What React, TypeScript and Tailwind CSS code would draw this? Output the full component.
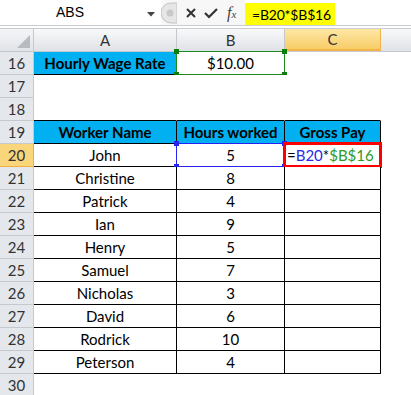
import React from 'react';

type Row = { n: number; a?: string; b?: string; kind: 'rate' | 'blank' | 'head' | 'data' | 'edge' | 'after' };

const rows: Row[] = [
  { n: 16, a: 'Hourly Wage Rate', b: '$10.00', kind: 'rate' },
  { n: 17, kind: 'blank' },
  { n: 18, kind: 'edge' },
  { n: 19, a: 'Worker Name', b: 'Hours worked', kind: 'head' },
  { n: 20, a: 'John', b: '5', kind: 'data' },
  { n: 21, a: 'Christine', b: '8', kind: 'data' },
  { n: 22, a: 'Patrick', b: '4', kind: 'data' },
  { n: 23, a: 'Ian', b: '9', kind: 'data' },
  { n: 24, a: 'Henry', b: '5', kind: 'data' },
  { n: 25, a: 'Samuel', b: '7', kind: 'data' },
  { n: 26, a: 'Nicholas', b: '3', kind: 'data' },
  { n: 27, a: 'David', b: '6', kind: 'data' },
  { n: 28, a: 'Rodrick', b: '10', kind: 'data' },
  { n: 29, a: 'Peterson', b: '4', kind: 'data' },
  { n: 30, kind: 'after' },
];

const font = { fontFamily: 'Lato, "Open Sans", sans-serif' };

function Handle({ color, pos }: { color: string; pos: string }) {
  return <span className={`absolute w-[5px] h-[5px] ${color} ${pos}`} />;
}

function FormulaBar() {
  return (
    <div className="h-[26px] flex border-b border-[#c9cdd2] bg-white" style={font}>
      <div className="w-[161px] flex items-center relative">
        <span className="w-[140px] text-center text-black" style={{ fontFamily: '"Liberation Sans", sans-serif', fontSize: 14 }}>ABS</span>
        <svg className="absolute left-[147px] top-[12px]" width="8" height="5" viewBox="0 0 8 5">
          <path d="M0 0 H8 L4 4.5 Z" fill="#444" />
        </svg>
      </div>
      <div className="w-[84px] flex items-center bg-[#f7f7f7]">
        <svg width="16" height="24" viewBox="0 0 16 24" className="shrink-0">
          <path d="M16 2 H10 A10 10 0 0 0 10 22 H16 Z" fill="#e6e6e6" stroke="#c2c2c2" />
          <circle cx="9" cy="12" r="3.5" fill="#c8c8c8" />
        </svg>
        <svg width="12" height="12" viewBox="0 0 12 12" className="ml-[8px]">
          <path d="M2 2 L10 10 M10 2 L2 10" stroke="#333" strokeWidth="2" />
        </svg>
        <svg width="14" height="12" viewBox="0 0 14 12" className="ml-[7px]">
          <path d="M1 6 L5 10 L13 2" stroke="#333" strokeWidth="2.2" fill="none" />
        </svg>
        <span className="ml-[9px] text-[#444] italic" style={{ fontFamily: '"Liberation Serif", serif', fontSize: 16 }}>
          f<span className="text-[11px]">x</span>
        </span>
      </div>
      <div className="flex-1 pt-[3px]">
        <div className="w-[90px] h-[22px] bg-[#ffff00] flex items-center pl-[7px] text-[14px] tracking-[-0.2px] text-black">=B20*$B$16</div>
      </div>
    </div>
  );
}

function ColHeader() {
  const base = 'h-full flex items-center justify-center border-r border-[#c5c9cf] bg-gradient-to-b from-[#f8f9fa] to-[#dfe2e7] text-[#333] text-[15px]';
  return (
    <div className="h-[23px] flex border-b border-[#c5c9cf]" style={font}>
      <div className="w-[34px] h-full relative border-r border-[#c5c9cf] bg-gradient-to-b from-[#f4f5f7] to-[#e1e4e8]">
        <svg className="absolute right-[3px] bottom-[3px]" width="13" height="13" viewBox="0 0 13 13">
          <path d="M13 0 V13 H0 Z" fill="#b7bbc1" />
        </svg>
      </div>
      <div className={`w-[143px] ${base}`}>A</div>
      <div className={`w-[108px] ${base}`}>B</div>
      <div className="w-[96px] h-full flex items-center justify-center border-r border-b-2 border-[#f2b34a] bg-gradient-to-b from-[#fde7a4] to-[#f8cd67] text-[#333] text-[15px]">C</div>
      <div className="flex-1 h-full bg-gradient-to-b from-[#f8f9fa] to-[#dfe2e7]" />
    </div>
  );
}

function SheetRow({ r }: { r: Row }) {
  const boxed = r.kind === 'head' || r.kind === 'data';
  const cell = 'h-full flex items-center justify-center text-[15px] text-black border-r border-b relative';
  const line = boxed ? 'border-black' : r.kind === 'edge' ? 'border-r-transparent border-b-black' : 'border-transparent';
  const fill = r.kind === 'head' ? 'bg-[#00b0f0] font-bold' : 'bg-white';
  const selRow = r.n === 20;
  return (
    <div className="h-[23px] flex" style={font}>
      <div
        className={`w-[34px] shrink-0 h-full flex items-center justify-center text-[15px] border-r border-b ${
          selRow ? 'bg-[#f9d67c] border-[#f0b040] text-[#333]' : 'bg-[#e4e7eb] border-[#c5c9cf] text-[#333]'
        }`}
      >
        {r.n}
      </div>
      {r.kind === 'rate' ? (
        <>
          <div className={`w-[143px] ${cell} bg-[#00b0f0] font-bold border-r-transparent border-b-black`}>{r.a}</div>
          <div className={`w-[108px] ${cell} border-transparent`}>
            {r.b}
            <span className="absolute -left-[1px] -top-[1px] right-[-1px] bottom-[-1px] border border-[#1e8a1e]" />
            <Handle color="bg-[#0b7d0b]" pos="-left-[3px] -top-[3px]" />
            <Handle color="bg-[#0b7d0b]" pos="-right-[3px] -top-[3px]" />
            <Handle color="bg-[#0b7d0b]" pos="-left-[3px] -bottom-[3px]" />
            <Handle color="bg-[#0b7d0b]" pos="-right-[3px] -bottom-[3px]" />
          </div>
          <div className={`w-[96px] ${cell} border-transparent`} />
        </>
      ) : (
        <>
          <div className={`w-[143px] ${cell} ${line} ${fill}`}>{r.a}</div>
          <div className={`w-[108px] ${cell} ${line} ${fill}`}>
            {r.b}
            {selRow && (
              <>
                <span className="absolute -left-[1px] -top-[1px] right-[0px] bottom-[-1px] border border-[#2424f0]" />
                <Handle color="bg-[#2424f0]" pos="-left-[3px] -top-[3px]" />
                <Handle color="bg-[#2424f0]" pos="-right-[3px] -top-[3px]" />
                <Handle color="bg-[#2424f0]" pos="-left-[3px] -bottom-[3px]" />
                <Handle color="bg-[#2424f0]" pos="-right-[3px] -bottom-[3px]" />
              </>
            )}
          </div>
          <div className={`w-[96px] ${cell} ${line} ${fill} ${selRow ? 'justify-start pl-[2px]' : ''}`}>
            {r.kind === 'head' && 'Gross Pay'}
            {selRow && (
              <>
                <span className="text-black">=</span>
                <span className="text-[#2a2ae8]">B20</span>
                <span className="text-black">*</span>
                <span className="text-[#2f9a1e]">$B$16</span>
                <span className="absolute -left-[2px] -top-[2px] -right-[2px] -bottom-[2px] border-[3px] border-[#ff0000]" />
              </>
            )}
          </div>
        </>
      )}
      <div className="flex-1 h-full bg-white" />
    </div>
  );
}

export default function App() {
  return (
    <div className="w-[411px] h-[395px] overflow-hidden bg-white">
      <FormulaBar />
      <div className="h-[3px] border-b border-[#c9cdd2] bg-white" />
      <ColHeader />
      {rows.map((r) => (
        <SheetRow key={r.n} r={r} />
      ))}
    </div>
  );
}
